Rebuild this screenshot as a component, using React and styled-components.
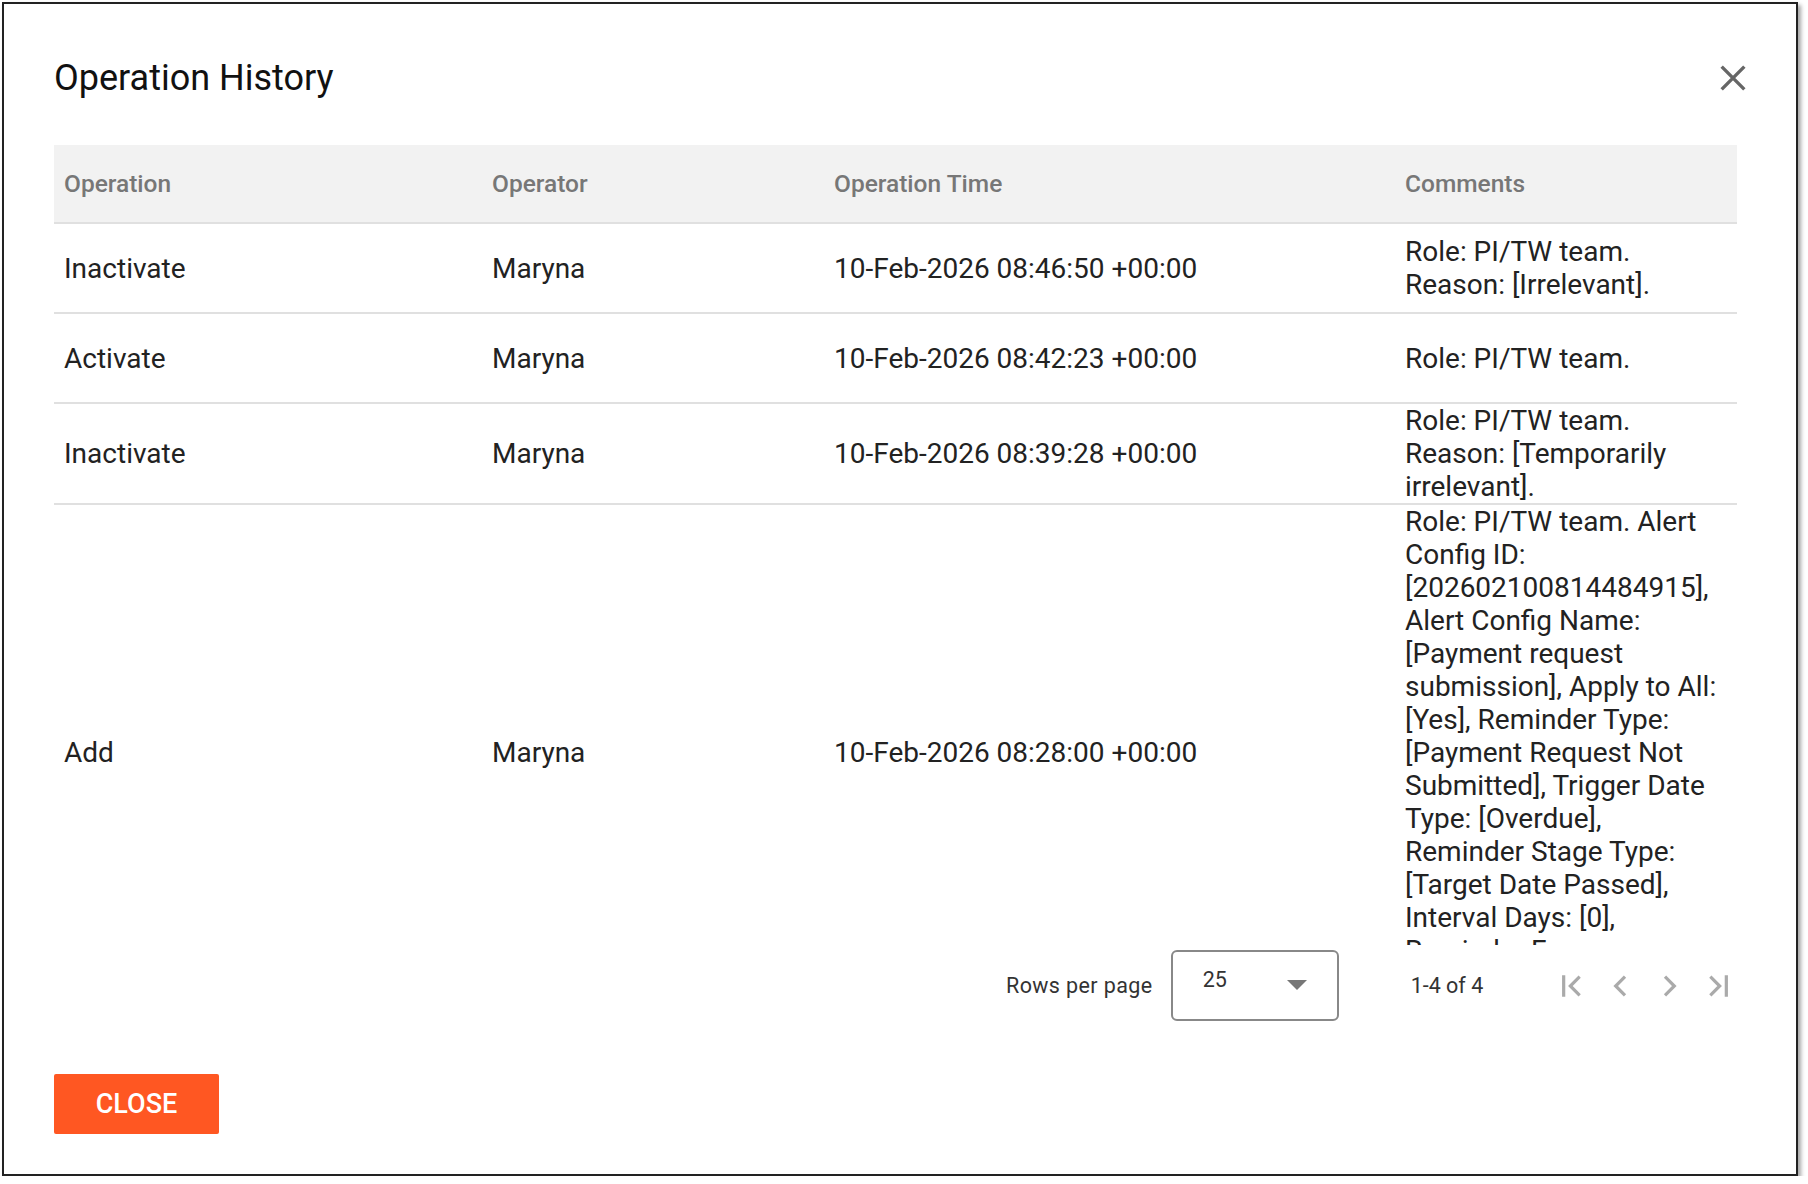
import React from 'react';
import styled, { createGlobalStyle } from 'styled-components';

const Global = createGlobalStyle`
  body { margin: 0; font-family: Roboto, "Liberation Sans", sans-serif; background: #fff; }
`;

const rows = [
  { op: 'Inactivate', who: 'Maryna', time: '10-Feb-2026 08:46:50 +00:00', comment: 'Role: PI/TW team. Reason: [Irrelevant].' },
  { op: 'Activate', who: 'Maryna', time: '10-Feb-2026 08:42:23 +00:00', comment: 'Role: PI/TW team.' },
  { op: 'Inactivate', who: 'Maryna', time: '10-Feb-2026 08:39:28 +00:00', comment: 'Role: PI/TW team. Reason: [Temporarily irrelevant].' },
  {
    op: 'Add', who: 'Maryna', time: '10-Feb-2026 08:28:00 +00:00',
    comment: 'Role: PI/TW team. Alert Config ID: [202602100814484915], Alert Config Name: [Payment request submission], Apply to All: [Yes], Reminder Type: [Payment Request Not Submitted], Trigger Date Type: [Overdue], Reminder Stage Type: [Target Date Passed], Interval Days: [0], Reminder Frequency: [Once], Status: [Active].',
  },
];

export default function App() {
  return (
    <>
      <Global />
      <Dialog>
        <Header>
          <Title>Operation History</Title>
          <CloseIcon viewBox="0 0 24 24">
            <path d="M4 4L20 20M20 4L4 20" />
          </CloseIcon>
        </Header>
        <TableWrap>
          <Table>
            <colgroup>
              <col style={{ width: 428 }} />
              <col style={{ width: 342 }} />
              <col style={{ width: 571 }} />
              <col />
            </colgroup>
            <thead>
              <tr>
                <Th>Operation</Th>
                <Th>Operator</Th>
                <Th>Operation Time</Th>
                <Th>Comments</Th>
              </tr>
            </thead>
            <tbody>
              {rows.map((r, i) => (
                <tr key={i}>
                  <Td>{r.op}</Td>
                  <Td>{r.who}</Td>
                  <Td>{r.time}</Td>
                  <Td>{r.comment}</Td>
                </tr>
              ))}
            </tbody>
          </Table>
        </TableWrap>
        <Pager>
          <PagerLabel>Rows per page</PagerLabel>
          <Select>
            <span>25</span>
            <Caret />
          </Select>
          <Count>1-4 of 4</Count>
          <Nav>
            <NavIcon viewBox="0 0 24 24"><path d="M5 4v16M17 5l-7 7 7 7" /></NavIcon>
            <NavIcon viewBox="0 0 24 24"><path d="M15 5l-7 7 7 7" /></NavIcon>
            <NavIcon viewBox="0 0 24 24"><path d="M9 5l7 7-7 7" /></NavIcon>
            <NavIcon viewBox="0 0 24 24"><path d="M7 5l7 7-7 7M19 4v16" /></NavIcon>
          </Nav>
        </Pager>
        <CloseButton>CLOSE</CloseButton>
      </Dialog>
    </>
  );
}

const Dialog = styled.div`
  box-sizing: border-box;
  width: 1796px;
  height: 1174px;
  margin: 2px 0 0 2px;
  border: 2px solid #222;
  box-shadow: 3px 3px 4px rgba(0,0,0,0.35);
  padding: 52px 50px 0 50px;
  display: flex;
  flex-direction: column;
`;

const Header = styled.div`
  display: flex;
  align-items: center;
  justify-content: space-between;
  height: 44px;
  margin-bottom: 45px;
`;

const Title = styled.h2`
  margin: 0;
  font-size: 36px;
  font-weight: 400;
  color: #111;
`;

const CloseIcon = styled.svg`
  width: 34px;
  height: 34px;
  margin-right: -4px;
  fill: none;
  stroke: #666;
  stroke-width: 2.4;
`;

const TableWrap = styled.div`
  width: 1683px;
  height: 800px;
  overflow: hidden;
`;

const Table = styled.table`
  width: 100%;
  border-collapse: collapse;
  table-layout: fixed;
`;

const Th = styled.th`
  background: #f2f2f2;
  height: 77px;
  padding: 0 10px;
  text-align: left;
  font-size: 24.5px;
  font-weight: 500;
  color: #777;
  border-bottom: 2px solid #e0e0e0;
`;

const Td = styled.td`
  height: 88px;
  padding: 0 10px;
  font-size: 28px;
  line-height: 33px;
  color: #222;
  border-bottom: 2px solid #e0e0e0;
  vertical-align: middle;
`;

const Pager = styled.div`
  display: flex;
  align-items: center;
  margin-top: 5px;
  padding-left: 952px;
`;

const PagerLabel = styled.span`
  font-size: 21.5px;
  color: #333;
  letter-spacing: 0.4px;
`;

const Select = styled.div`
  box-sizing: border-box;
  width: 168px;
  height: 71px;
  margin-left: 18px;
  border: 2px solid #888;
  border-radius: 6px;
  display: flex;
  justify-content: space-between;
  padding: 0 30px 12px 30px;
  align-items: center;
  font-size: 21.5px;
  color: #333;
`;

const Caret = styled.span`
  width: 0;
  height: 0;
  border-left: 10px solid transparent;
  border-right: 10px solid transparent;
  border-top: 10px solid #777;
  margin-top: 10px;
`;

const Count = styled.span`
  margin-left: 72px;
  font-size: 21.5px;
  color: #333;
`;

const Nav = styled.div`
  display: flex;
  gap: 16px;
  margin-left: 74px;
`;

const NavIcon = styled.svg`
  width: 32px;
  height: 32px;
  fill: none;
  stroke: #aaa;
  stroke-width: 2.4;
`;

const CloseButton = styled.button`
  margin-top: 53px;
  width: 165px;
  height: 60px;
  border: none;
  border-radius: 2px;
  background: #ff5722;
  color: #fff;
  font-family: Roboto, sans-serif;
  font-size: 27px;
  font-weight: 500;
`;
